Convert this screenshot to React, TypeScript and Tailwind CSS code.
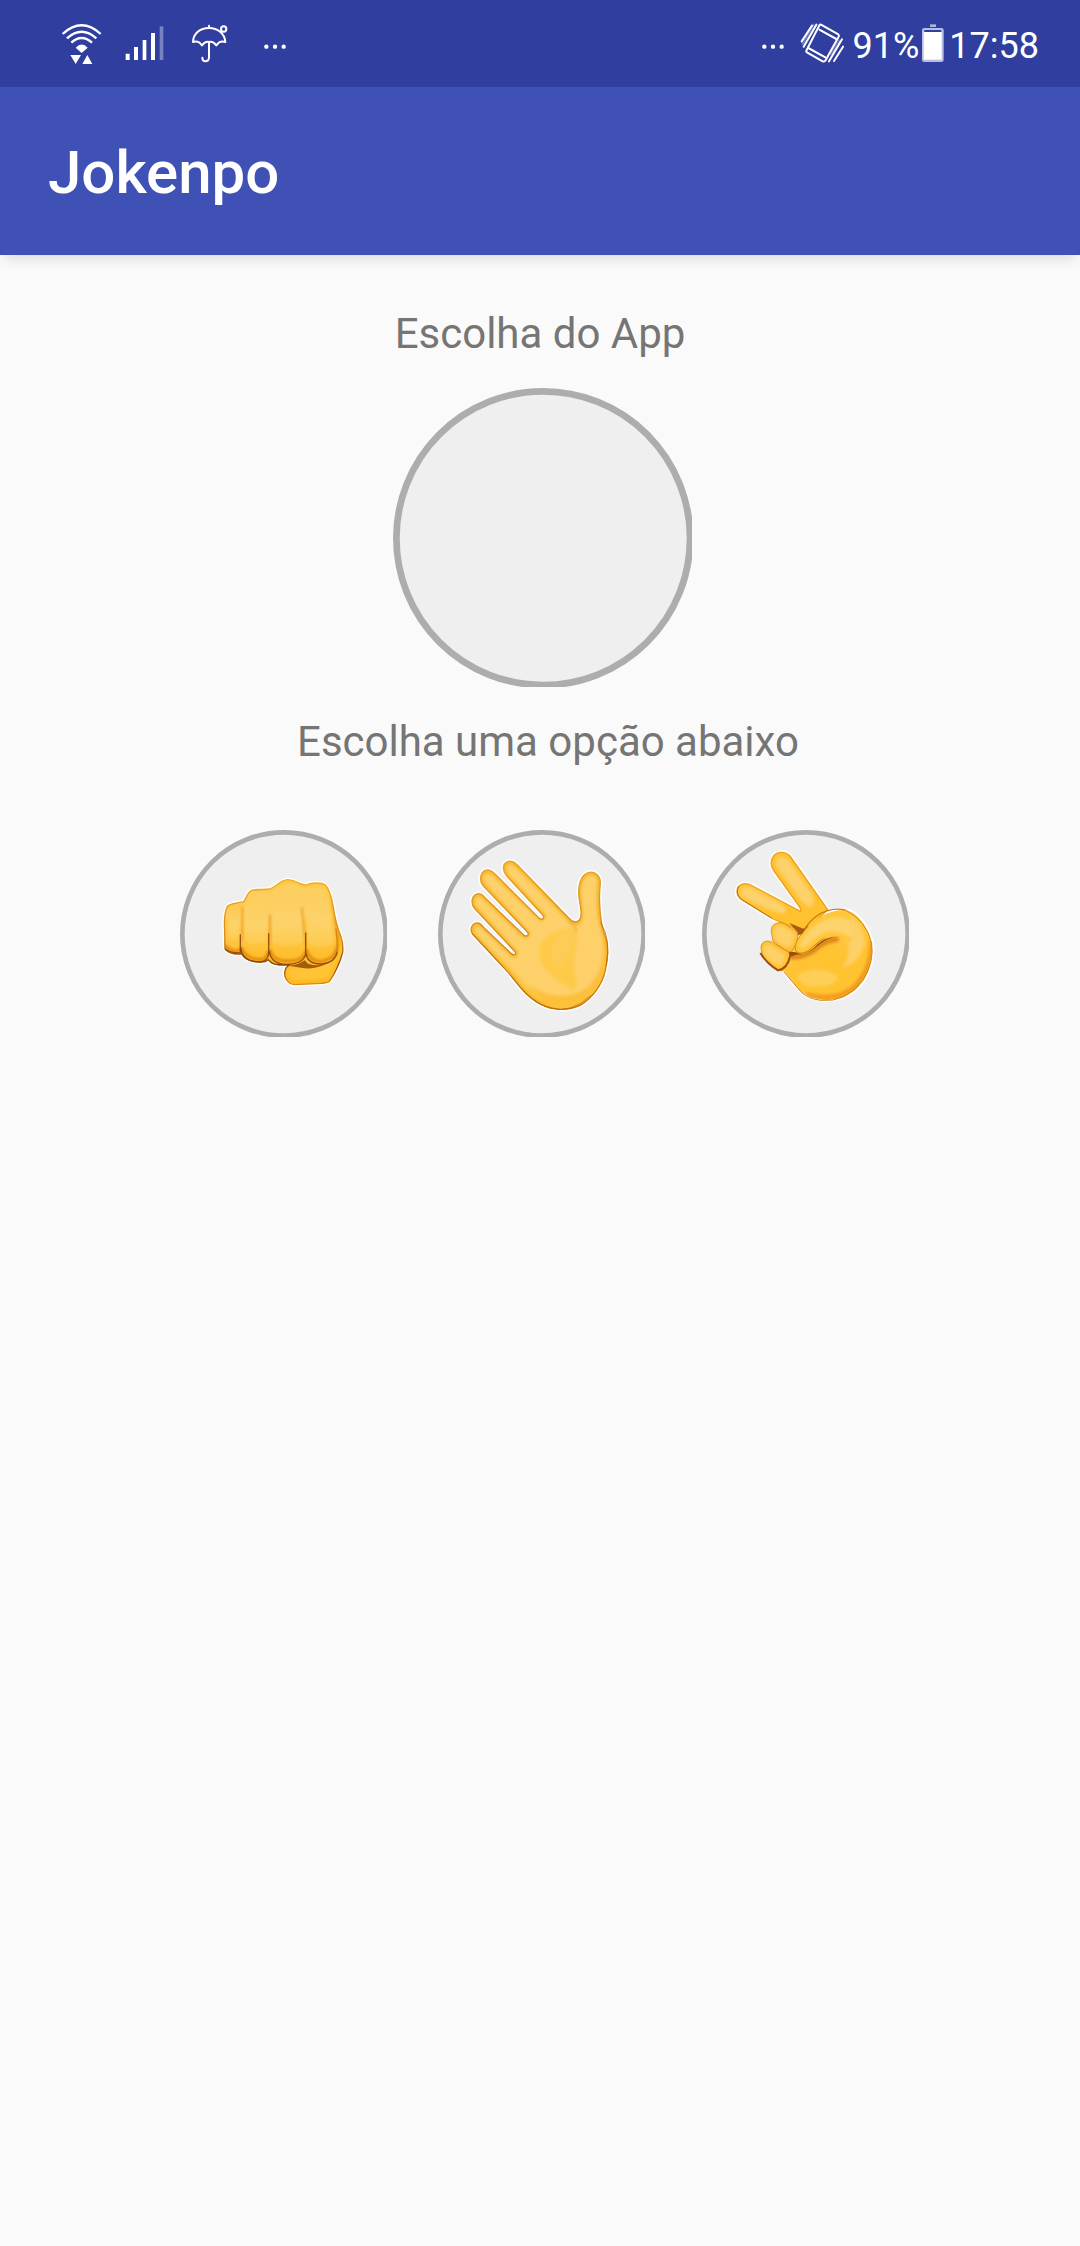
import type { ReactNode } from "react";

function WifiIcon() {
  return (
    <svg viewBox="66 60 120 150" className="h-[50px] w-10" fill="none" stroke="#fff" strokeWidth="7" aria-label="Wi-Fi">
      <path d="M68 102Q125 50 182 102M81 115Q125 76 169 115M94 128Q125 100 156 128" />
      <path d="M107 143Q125 124 143 143L125 159Z" fill="#fff" stroke="none" />
      <path d="M91 165h32l-16 27ZM127 192h30l-15-27Z" fill="#fff" stroke="none" />
    </svg>
  );
}

function SignalIcon() {
  return (
    <svg viewBox="255 60 120 150" className="h-[50px] w-10" fill="#fff" aria-label="Sinal">
      <path d="M257 161h12v19h-12ZM282 141h12v39h-12ZM308 120h11v60h-11ZM333 99h12v81h-12Z" />
      <path d="M359 79h11v101h-11Z" opacity="0.35" />
    </svg>
  );
}

function UmbrellaIcon() {
  return (
    <svg viewBox="444 60 132 150" className="h-[50px] w-11" fill="none" stroke="#fff" strokeWidth="6" strokeLinejoin="round" strokeLinecap="round" aria-label="Clima">
      <path d="M459 126C460 100 480 84 507 84C533 84 554 100 556 126Q540 120 529 136Q519 123 507 126Q496 123 486 136Q475 120 459 126Z" />
      <path d="M507 77V84M507 127V174Q506 184 496 184Q487 183 487 173" />
      <circle cx="551" cy="87" r="8" />
    </svg>
  );
}

function DotsIcon() {
  return (
    <svg viewBox="645 60 123 150" className="h-[50px] w-[41px]" fill="#fff" aria-label="Mais notificações">
      <circle cx="679" cy="140" r="6.5" />
      <circle cx="705" cy="140" r="6.5" />
      <circle cx="731" cy="140" r="6.5" />
    </svg>
  );
}

function VibrateIcon() {
  return (
    <svg viewBox="177 60 135 150" className="h-[50px] w-[45px]" fill="none" stroke="#fff" strokeWidth="6" strokeLinejoin="round" strokeLinecap="round" aria-label="Vibração">
      <path d="M240 74L292 103Q295 106 293 110L253 182Q249 186 245 184L199 158Q194 155 197 150L235 76Q237 73 240 74Z" />
      <path d="M235 89L286 117M202 144L253 172" />
      <path d="M226 74L188 140M213 77L182 124M303 118L264 184M306 140L279 183" />
      <path d="M218 74L185 132M295 122L270 162" opacity="0.3" />
    </svg>
  );
}

function BatteryIcon() {
  return (
    <svg viewBox="546 60 72 150" className="h-[50px] w-6" aria-label="Bateria">
      <path d="M573 73h18v8h-18Z" fill="#aeb4dd" />
      <rect x="549" y="84" width="65" height="102" rx="7" fill="#b9bee3" />
      <path d="M556 90h51v7h-51Z" fill="#303f9f" />
      <path d="M554 96h54v83h-54Z" fill="#fff" />
    </svg>
  );
}

function Fist() {
  const outline =
    "M164 335C162 302 166 274 172 263C178 252 202 253 221 248C229 239 231 219 245 214C261 208 284 215 302 209C319 202 331 184 352 182C373 181 389 198 407 198C424 190 456 190 466 198C480 213 485 237 489 258C493 287 501 323 512 350C519 369 519 389 518 400C511 430 491 470 478 487C474 492 465 492 454 493L375 497C351 496 338 471 347 449C350 444 354 441 358 438C338 439 308 439 299 426L295 422C282 434 228 431 215 405C196 407 167 401 165 387Z";
  return (
    <>
      <defs>
        <linearGradient id="fist-fill" x1="0" y1="0" x2="0" y2="1">
          <stop offset="0" stopColor="#fdc83f" />
          <stop offset="0.35" stopColor="#fccb58" />
          <stop offset="0.7" stopColor="#ffc030" />
          <stop offset="1" stopColor="#fdb824" />
        </linearGradient>
        <linearGradient id="finger-fill" x1="0" y1="0" x2="0" y2="1">
          <stop offset="0" stopColor="#fdd062" stopOpacity="0" />
          <stop offset="0.5" stopColor="#fdd36c" />
          <stop offset="1" stopColor="#fdcb4d" />
        </linearGradient>
        <linearGradient id="fist-edge" x1="0" y1="0" x2="0" y2="1">
          <stop offset="0" stopColor="#f3ac25" />
          <stop offset="0.55" stopColor="#d98916" />
          <stop offset="0.8" stopColor="#8b4207" />
          <stop offset="1" stopColor="#e28a11" />
        </linearGradient>
        <filter id="fist-soft" x="-10%" y="-10%" width="120%" height="120%">
          <feGaussianBlur stdDeviation="3" />
        </filter>
        <clipPath id="fist-clip">
          <path d={outline} />
        </clipPath>
      </defs>
      <path d={outline} stroke="#fff" strokeWidth="12" />
      <path d={outline} fill="url(#fist-fill)" />
      <g clipPath="url(#fist-clip)">
        <g filter="url(#fist-soft)">
          <path d="M232 228Q260 210 300 222Q350 175 404 208Q450 195 466 215Q478 250 485 300L220 290Z" fill="#fccf61" />
          <path d="M174 270Q190 260 211 265L208 355Q190 374 174 355Z" fill="url(#finger-fill)" />
          <path d="M220 250Q257 240 294 265L291 366Q257 388 223 365Z" fill="url(#finger-fill)" />
          <path d="M309 235Q352 220 396 245L401 368Q352 393 306 370Z" fill="url(#finger-fill)" />
          <path d="M411 230Q440 215 475 233L491 375Q445 396 414 370Z" fill="url(#finger-fill)" />
          <path d="M217 265V365M300 288V382M395 265L407 380" stroke="#eda625" strokeWidth="6" fill="none" />
          <path d="M487 235Q496 300 505 355Q507 403 482 424" stroke="#ed9f15" strokeWidth="9" fill="none" />
          <path d="M165 379Q185 402 211 393M213 384Q225 421 273 422Q292 420 295 397M300 390Q305 424 347 426Q400 428 407 397M408 390Q418 427 453 427Q495 422 501 385" stroke="#e58e10" strokeWidth="10" fill="none" />
          <path d="M357 452Q368 443 420 448Q460 442 490 420L507 397L474 478Q420 484 373 483Q350 475 357 452Z" fill="#ffc334" />
        </g>
      </g>
      <path d={outline} stroke="url(#fist-edge)" strokeWidth="4" fill="none" />
      <path d="M166 390Q180 402 211 402V348M212 385Q216 428 268 429Q294 428 296 402V344M298 397Q303 435 350 436Q399 435 407 406V342M408 404Q414 437 455 435Q495 432 502 398" fill="none" stroke="#85400b" strokeWidth="4" strokeLinecap="round" opacity="0.85" />
      <path d="M502 398Q503 365 498 330" fill="none" stroke="#d98512" strokeWidth="4" strokeLinecap="round" />
      <path d="M356 440Q385 439 404 424L414 434Q448 445 477 430Q440 453 397 447Z" fill="#8c420a" opacity="0.8" />
    </>
  );
}

function Palm() {
  const outline =
    "M229 130C239 124 251 127 260 136L401 281C414 295 424 309 436 309C451 308 455 292 453 275C451 252 446 240 446 218C447 193 454 166 477 160C495 157 511 170 511 190C510 215 507 222 509 253C510 293 516 330 528 357C536 388 534 421 526 454C517 497 488 535 454 557C411 580 356 573 318 548C279 524 259 489 237 463L128 346C117 331 127 309 145 312C153 314 159 323 166 330L244 404C254 411 261 406 254 397L135 270C119 251 126 226 146 224C156 223 162 233 169 240L282 349C291 354 298 348 293 340L160 201C145 184 152 155 171 153C184 151 193 163 202 172L329 299C339 304 344 296 339 289L230 171C217 154 217 138 229 130Z";
  return (
    <>
      <defs>
        <linearGradient id="palm-fill" x1="0" y1="0" x2="1" y2="1">
          <stop offset="0" stopColor="#fecb51" />
          <stop offset="0.6" stopColor="#fcca4c" />
          <stop offset="1" stopColor="#ffba1f" />
        </linearGradient>
        <linearGradient id="palm-edge" x1="0" y1="0" x2="0" y2="1">
          <stop offset="0" stopColor="#e7a52a" />
          <stop offset="1" stopColor="#c4750d" />
        </linearGradient>
        <filter id="palm-soft" x="-10%" y="-10%" width="120%" height="120%">
          <feGaussianBlur stdDeviation="4" />
        </filter>
        <clipPath id="palm-clip">
          <path d={outline} />
        </clipPath>
      </defs>
      <path d={outline} stroke="#fff" strokeWidth="13" />
      <path d={outline} fill="url(#palm-fill)" />
      <g clipPath="url(#palm-clip)">
        <path d={outline} stroke="#f5b22e" strokeWidth="15" fill="none" filter="url(#palm-soft)" />
        <g filter="url(#palm-soft)">
          <path d="M237 139L258 151L405 301Q425 325 446 321Q466 310 459 270Q451 220 460 190Q479 158 499 180Q493 240 501 300Q530 380 515 440Q487 520 425 542Q340 556 272 475L135 339Q135 320 153 329L249 420Q273 417 264 394L140 257Q133 235 151 237L281 362Q304 361 301 338L166 188Q160 164 181 168L330 307Q350 305 349 286L235 163Z" fill="#fdd06a" />
          <path d="M432 322C368 335 327 355 326 400C330 455 385 488 425 514Q445 515 440 485Q425 440 441 372Q449 348 432 322Z" fill="#fecb4a" />
          <path d="M430 326C366 344 350 391 378 445C410 434 422 387 439 348Z" fill="#fdcc58" />
          <path d="M300 498Q390 562 474 503Q518 460 523 375L532 465Q490 590 360 571Z" fill="#fdc03a" />
        </g>
        <path d="M415 305Q437 315 439 340" stroke="#efab2c" strokeWidth="5" fill="none" filter="url(#palm-soft)" />
      </g>
      <path d={outline} stroke="url(#palm-edge)" strokeWidth="4" fill="none" />
      <path d="M240 467Q299 547 356 567Q426 585 481 530M512 310Q545 365 528 440M127 343L222 447" stroke="#b66a09" strokeWidth="3" fill="none" opacity="0.7" />
    </>
  );
}

function Scissors() {
  const fingers =
    "M248 116C257 97 284 95 300 111L414 273C397 285 353 330 336 341C315 326 280 313 250 300L154 241C137 230 137 205 153 197C165 190 179 196 188 201L331 277C334 276 333 269 329 264L250 153C242 141 241 129 248 116Z";
  const hand =
    "M337 340Q400 270 466 273C500 280 531 317 544 367C554 419 533 480 495 513C449 550 382 553 336 520C313 497 298 474 281 455L262 440L300 400Z";
  return (
    <>
      <defs>
        <linearGradient id="scissors-fill" x1="0.2" y1="0" x2="0.8" y2="1">
          <stop offset="0" stopColor="#ffcc4d" />
          <stop offset="0.65" stopColor="#ffc232" />
          <stop offset="1" stopColor="#f8a313" />
        </linearGradient>
        <filter id="scissors-soft" x="-20%" y="-20%" width="140%" height="140%">
          <feGaussianBlur stdDeviation="4" />
        </filter>
        <filter id="scissors-edge" x="-20%" y="-20%" width="140%" height="140%">
          <feGaussianBlur stdDeviation="2" />
        </filter>
        <clipPath id="scissors-clip">
          <path d={hand} />
        </clipPath>
      </defs>
      <path d={fingers + hand} stroke="#fff" strokeWidth="13" fill="#fff" />
      <path d={fingers} fill="#ffc12e" stroke="#eca01d" strokeWidth="4" />
      <g filter="url(#scissors-soft)">
        <path d="M257 124Q272 105 293 119L368 228Q380 255 358 265Q340 255 328 236L258 142Z" fill="#fdd26c" />
        <path d="M152 209Q171 198 192 211L278 257Q295 275 279 285Q220 268 152 231Z" fill="#fdd26c" />
      </g>
      <path d="M146 201Q135 225 154 241L245 298" stroke="#b77620" strokeWidth="3" fill="none" />
      <path d={hand} fill="url(#scissors-fill)" />
      <g clipPath="url(#scissors-clip)">
        <g filter="url(#scissors-soft)">
          <path d="M316 422Q380 380 426 364Q448 365 425 405Q480 400 520 348Q561 448 460 519Q369 555 310 491L286 456Z" fill="#ffc331" />
          <path d="M321 470Q390 433 444 474Q430 507 356 501Q327 493 321 470Z" fill="#fecf57" />
          <path d="M463 345Q492 400 456 447Q510 430 524 372Q520 318 484 292Z" fill="#fdd067" />
          <path d="M544 365Q547 445 491 506Q432 547 350 526" stroke="#f0981a" strokeWidth="12" fill="none" />
          <path d="M300 414Q339 417 372 395Q400 366 446 360" stroke="#d98216" strokeWidth="14" fill="none" />
        </g>
      </g>
      <path d="M300 398L340 405Q365 398 382 376Q402 355 441 353Q410 358 384 380Q356 406 318 408L300 412Z" fill="#a4550d" filter="url(#scissors-edge)" />
      <path d="M337 342C370 298 416 273 464 275Q505 320 480 372Q462 349 436 350C400 352 383 371 365 387C347 405 319 406 315 387C314 369 326 354 337 342Z" fill="#ffc638" />
      <path d="M360 333C400 294 450 285 480 304Q502 330 484 358Q450 331 411 339C380 346 361 377 339 387Q325 384 331 371Z" fill="#fdd36e" filter="url(#scissors-soft)" />
      <path d="M337 342C315 367 307 395 327 402C353 408 373 372 404 357" stroke="#d98a18" strokeWidth="3" fill="none" />
      <path d="M298 312L340 329L357 319Q344 334 337 344L322 350L320 337Z" fill="#a85a10" filter="url(#scissors-edge)" />
      <path d="M244 337C242 315 266 306 283 314L321 338C329 352 316 384 304 398Q288 400 249 366Z" fill="#ffc132" stroke="#dc9220" strokeWidth="3" />
      <path d="M250 336Q259 314 279 322L310 342Q319 358 300 384Q281 386 253 360Z" fill="#fdd06a" filter="url(#scissors-soft)" />
      <path d="M213 384C216 362 239 363 254 374L298 401C304 416 292 444 276 456Q260 455 217 413Z" fill="#ffc132" stroke="#dc9220" strokeWidth="3" />
      <path d="M220 388Q228 370 247 382L285 407Q288 424 270 442Q251 434 222 408Z" fill="#fdd067" filter="url(#scissors-soft)" />
      <path d="M211 402Q232 436 264 454Q293 448 300 412" stroke="#9a4d0b" strokeWidth="6" fill="none" filter="url(#scissors-edge)" />
      <path d="M296 400Q312 397 322 401L308 411L299 413Z" fill="#9a4d0b" />
      <path d="M414 274Q372 287 343 330M414 275Q439 267 466 273" stroke="#d07c14" strokeWidth="4" fill="none" />
      <path d="M466 273Q530 305 545 373Q553 427 520 483Q469 552 391 544Q357 539 335 521L281 458" stroke="#d38214" strokeWidth="3" fill="none" />
    </>
  );
}

const choices: { name: string; viewBox: string; spacing: string; art: ReactNode }[] = [
  { name: "Pedra", viewBox: "30 33 621 621", spacing: "mr-[51px]", art: <Fist /> },
  { name: "Papel", viewBox: "24 33 621 621", spacing: "mr-[57px]", art: <Palm /> },
  { name: "Tesoura", viewBox: "36 33 621 621", spacing: "", art: <Scissors /> },
];

function Disc({ className, stroke, viewBox = "0 0 621 621", children }: { className: string; stroke: number; viewBox?: string; children?: ReactNode }) {
  const [x, y] = viewBox.split(" ").map(Number);
  return (
    <svg viewBox={viewBox} className={className} fill="none" aria-hidden="true">
      <circle cx={x + 312} cy={y + 312} r={312 - stroke / 2} fill="#efefef" stroke="#adadad" strokeWidth={stroke} />
      {children}
    </svg>
  );
}

export default function App() {
  return (
    <div className="flex min-h-screen flex-col bg-[#fafafa] font-[Roboto,sans-serif]">
      <div className="flex h-[87px] items-center justify-between bg-[#303f9f] pt-[3px] pr-[41px] pl-[62px] text-[36px] leading-none text-white">
        <div className="flex items-center gap-[23px]">
          <WifiIcon />
          <SignalIcon />
          <UmbrellaIcon />
          <DotsIcon />
        </div>
        <div className="flex items-center">
          <div className="flex gap-1.5">
            <DotsIcon />
            <VibrateIcon />
          </div>
          <span className="pt-0.5 pr-0.5 pl-2">91%</span>
          <BatteryIcon />
          <time className="pt-0.5 pl-1">17:58</time>
        </div>
      </div>
      <header className="flex h-[168px] items-center bg-[#3f51b5] px-12 pt-1 shadow-[0_8px_12px_-4px_rgba(0,0,0,0.12)]">
        <h1 className="text-[60px] leading-none font-medium text-white">Jokenpo</h1>
      </header>
      <main className="flex flex-col items-center pt-[55px] text-[42px] leading-[48px] text-[#757575]">
        <h2>Escolha do App</h2>
        <div className="mt-[30px] pl-1">
          <Disc className="size-[299px]" stroke={14} />
        </div>
        <p className="mt-[31px] pl-4">Escolha uma opção abaixo</p>
        <div className="mt-16 flex pl-2">
          {choices.map((choice) => (
            <button key={choice.name} type="button" aria-label={choice.name} className={choice.spacing}>
              <Disc className="size-[207px]" stroke={14} viewBox={choice.viewBox}>
                {choice.art}
              </Disc>
            </button>
          ))}
        </div>
      </main>
    </div>
  );
}
